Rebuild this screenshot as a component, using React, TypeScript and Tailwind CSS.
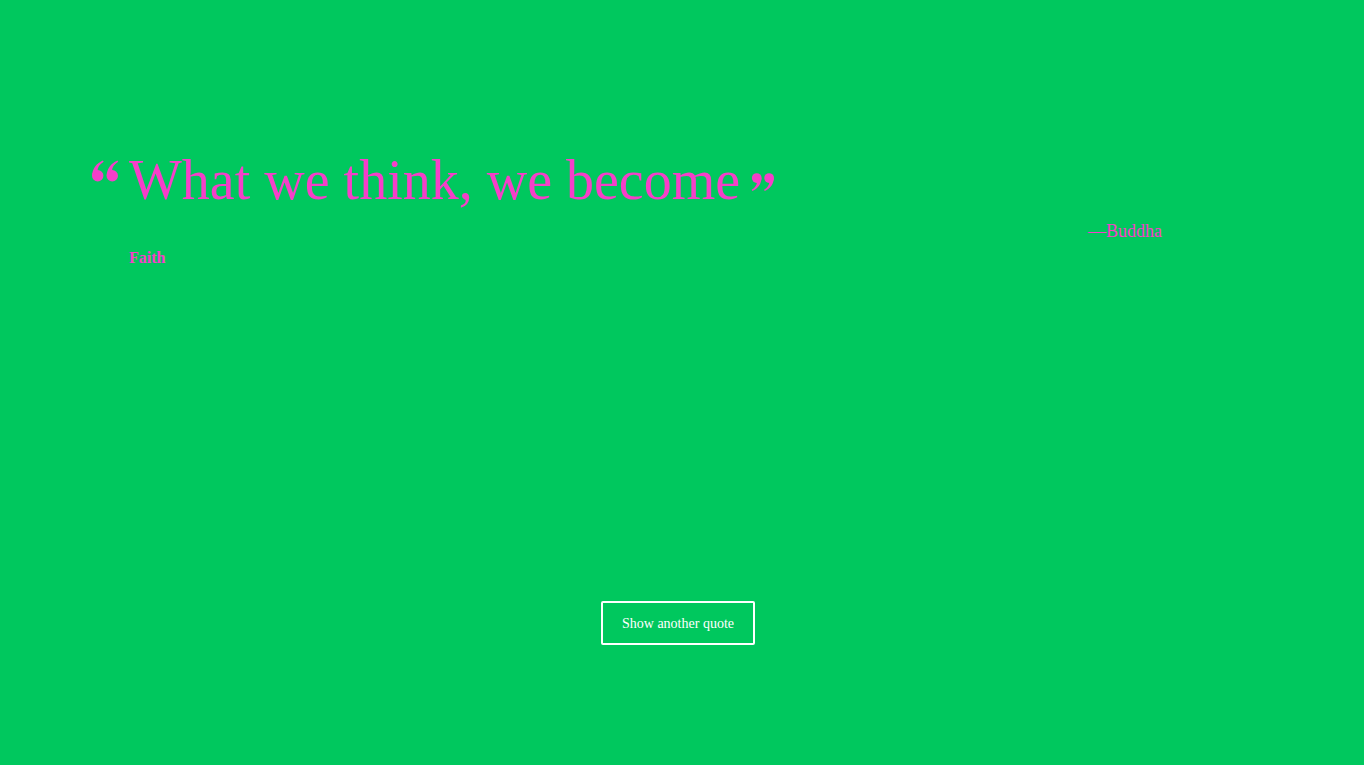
const serif = { fontFamily: '"Liberation Serif", "DejaVu Serif", serif' };

const QuoteMark = ({ flip }: { flip?: boolean }) => (
  <svg
    viewBox="0 0 26 21"
    className={flip ? "w-[23px] h-[20px] rotate-180" : "w-[27px] h-[22px]"}
    fill="currentColor"
  >
    <circle cx="5.5" cy="15" r="5.5" />
    <path d="M0.2 15 C0.2 8.5 4 3.2 10.5 0.3 L11.2 1.6 C7.5 3.8 5.4 7 5.2 10.5 Z" />
    <circle cx="19.5" cy="15" r="5.5" />
    <path d="M14.2 15 C14.2 8.5 18 3.2 24.5 0.3 L25.2 1.6 C21.5 3.8 19.4 7 19.2 10.5 Z" />
  </svg>
);

export default function App() {
  return (
    <div className="w-full h-[765px] bg-[#00c85e] text-[#f63fc9]" style={serif}>
      <div className="pt-[152px] pl-[92px] w-[1162px]">
        <div className="flex items-start">
          <span className="mt-[8px] w-[37px]">
            <QuoteMark />
          </span>
          <h1 className="text-[56px] leading-none">What we think, we become</h1>
          <span className="mt-[20px] ml-[11px]">
            <QuoteMark flip />
          </span>
        </div>
        <div className="text-right text-[18px] leading-none mt-[14px]">—Buddha</div>
        <div className="pl-[37px] text-[16px] leading-none font-bold mt-[10px]">Faith</div>
      </div>
      <div className="flex pl-[601px] pt-[335px]">
        <button className="h-[44px] px-[19px] border-2 border-white rounded-[2px] text-white text-[14px]">
          Show another quote
        </button>
      </div>
    </div>
  );
}
